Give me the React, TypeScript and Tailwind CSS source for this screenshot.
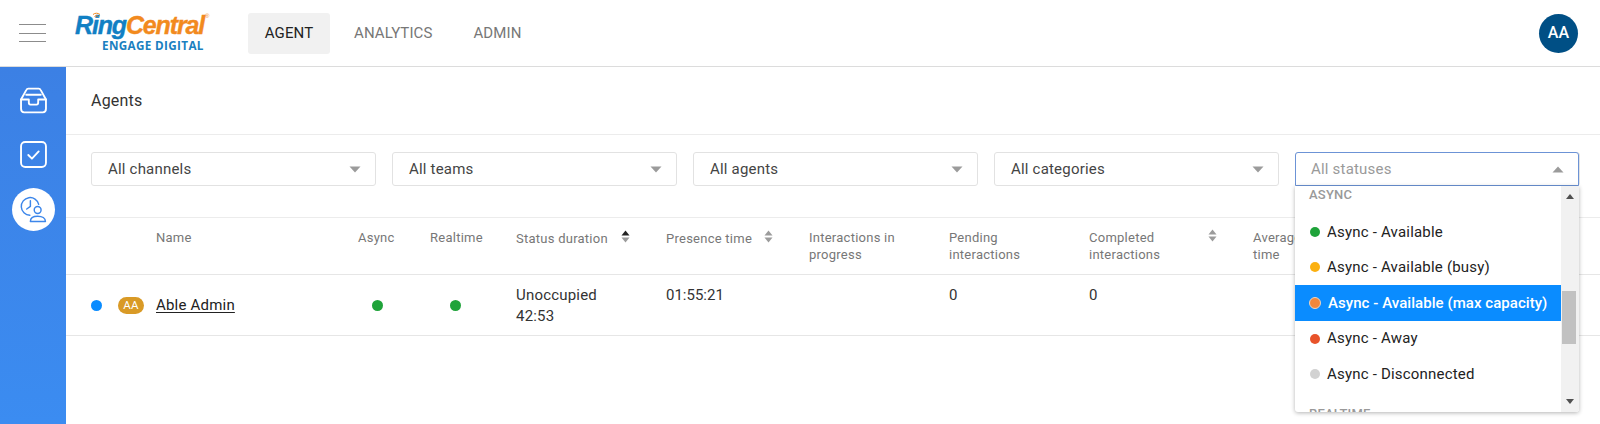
import React from "react";

const Caret = ({ up = false, cls = "" }: { up?: boolean; cls?: string }) => (
  <svg width="12" height="7" viewBox="0 0 12 7" className={cls}>
    <path d={up ? "M6 0.5L11.5 6.5H0.5Z" : "M0.5 0.5H11.5L6 6.5Z"} fill="#9b9b9b" />
  </svg>
);

const Sort = ({ active = false }: { active?: boolean }) => (
  <svg width="9" height="13" viewBox="0 0 9 13" className="shrink-0">
    <path d="M4.5 0.5L8.5 5.5H0.5Z" fill={active ? "#222" : "#9b9b9b"} />
    <path d="M0.5 7.5H8.5L4.5 12.5Z" fill="#9b9b9b" />
  </svg>
);

const Filter = ({ label }: { label: string }) => (
  <div className="flex h-[34px] w-[285px] items-center justify-between rounded-[3px] border border-[#e2e2e2] bg-white pl-[16px] pr-[14px] text-[15px] text-[#444]">
    <span className="pt-[1px]">{label}</span>
    <Caret />
  </div>
);

const Option = ({ color, label, active = false }: { color: string; label: string; active?: boolean }) => (
  <div className={`flex h-[35.6px] items-center ${active ? "bg-[#0a8cff] pl-[14px] font-medium tracking-[0.05px] text-white" : "pl-[15px] text-[#222]"}`}>
    <span
      className={`rounded-full ${active ? "mr-[7px] h-[12px] w-[12px] border border-[#e8d5c4]" : "mr-[7px] h-[10px] w-[10px]"}`}
      style={{ backgroundColor: color }}
    />
    <span className="whitespace-nowrap">{label}</span>
  </div>
);

const Head = ({ children }: { children: React.ReactNode }) => (
  <div className="leading-[17px]">{children}</div>
);

const App = () => (
  <div className="relative flex h-[424px] w-[1600px] flex-col overflow-hidden bg-white font-['Roboto',sans-serif] tracking-[0.2px]">
    <header className="flex h-[67px] shrink-0 items-center border-b border-[#dcdcdc] bg-white">
      <div className="ml-[19px] flex w-[27px] flex-col gap-[7.5px]">
        <div className="h-px bg-[#8c8c8c]" />
        <div className="h-px bg-[#8c8c8c]" />
        <div className="h-px bg-[#8c8c8c]" />
      </div>
      <div className="ml-[29px] flex w-[135px] flex-col">
        <div className="relative flex h-[24px] items-center text-[25px] font-bold italic leading-none tracking-[-1.15px] [-webkit-text-stroke:0.4px] font-['Liberation_Sans',sans-serif]">
          <span className="text-[#1180c4]">Ring</span>
          <span className="text-[#f28a1e]">Central</span>
          <span className="ml-[1px] self-start text-[6px] font-normal not-italic text-[#f28a1e] [-webkit-text-stroke:0px]">®</span>
          <svg width="9" height="6" viewBox="0 0 9 6" className="absolute left-[17px] top-[-1px]">
            <path d="M1 2.5C3 .8 6 .8 8 2.5M2.5 4.5C3.8 3.5 5.2 3.5 6.5 4.5" stroke="#f28a1e" strokeWidth="1" fill="none" />
          </svg>
        </div>
        <div className="ml-[27px] whitespace-nowrap text-[11.7px] font-bold leading-[16px] tracking-[0.35px] text-[#1a80c0] font-['Open_Sans',sans-serif]">
          ENGAGE DIGITAL
        </div>
      </div>
      <nav className="ml-[38px] flex items-center text-[15px] tracking-[0.1px]">
        <div className="flex h-[41px] w-[82px] items-center justify-center rounded-[3px] bg-[#f1f1f1] text-[#222]">AGENT</div>
        <div className="ml-[24px] text-[#777]">ANALYTICS</div>
        <div className="ml-[41px] text-[#777]">ADMIN</div>
      </nav>
      <div className="ml-auto mr-[22px] flex h-[39px] w-[39px] items-center justify-center rounded-full bg-[#004f85] text-[16px] font-medium text-white">
        AA
      </div>
    </header>

    <div className="flex min-h-0 flex-1">
      <aside className="flex w-[66px] shrink-0 flex-col items-center bg-gradient-to-b from-[#3c80e4] to-[#3b8cf1] pt-[20px]">
        <svg width="27" height="27" viewBox="0 0 26 26" fill="none" stroke="white" strokeWidth="1.8" strokeLinejoin="round" strokeLinecap="round">
          <path d="M1 12L6 3C6.4 2.2 7 1.6 8 1.6H18C19 1.6 19.6 2.2 20 3L25 12V21C25 23 24 24.4 22 24.4H4C2 24.4 1 23 1 21Z" />
          <path d="M1 12H8.5V15C8.5 16.3 9 17 10 17H16C17 17 17.5 16.3 17.5 15V12H25" />
          <path d="M6 7.5H20" />
        </svg>
        <svg width="27" height="27" viewBox="0 0 26 26" fill="none" stroke="white" strokeWidth="1.8" strokeLinejoin="round" strokeLinecap="round" className="mt-[27px]">
          <rect x="1" y="1" width="24" height="24" rx="4" />
          <path d="M8 13.5L11.5 17L18 10" />
        </svg>
        <div className="mt-[20px] flex h-[43px] w-[43px] items-center justify-center rounded-full bg-white">
          <svg width="27" height="27" viewBox="0 0 26 26" fill="none" stroke="#3c86ea" strokeWidth="1.4" strokeLinecap="round" strokeLinejoin="round">
            <path d="M9.5 18.5A8.5 8.5 0 1 1 18 8" />
            <path d="M10 4.5V10L6.5 12.5" />
            <circle cx="17" cy="13.5" r="3.3" />
            <path d="M10 24.5C10 21.5 12.5 19.5 17 19.5C21.5 19.5 24.5 21.5 24.5 24.5Z" />
          </svg>
        </div>
      </aside>

      <main className="min-w-0 flex-1">
        <div className="flex h-[68px] items-center border-b border-[#ececec] pl-[25px] text-[16px] text-[#333]">Agents</div>
        <div className="flex h-[83px] gap-[16px] border-b border-[#ececec] pl-[25px] pt-[17px]">
          <Filter label="All channels" />
          <Filter label="All teams" />
          <Filter label="All agents" />
          <Filter label="All categories" />
          <Filter label="" />
        </div>

        <div className="grid h-[57px] grid-cols-[90px_202px_72px_86px_150px_143px_140px_140px_164px_1fr] items-start border-b border-[#e6e6e6] pt-[11px] text-[13px] tracking-[0.25px] text-[#777]">
          <div />
          <Head>Name</Head>
          <Head>Async</Head>
          <Head>Realtime</Head>
          <div className="flex w-[114px] justify-between pt-[1px]"><Head>Status duration</Head><Sort active /></div>
          <div className="flex w-[107px] justify-between pt-[1px]"><Head>Presence time</Head><Sort /></div>
          <Head>Interactions in<br />progress</Head>
          <Head>Pending<br />interactions</Head>
          <div className="flex w-[128px] justify-between"><Head>Completed<br />interactions</Head><Sort /></div>
          <Head>Average<br />time</Head>
        </div>

        <div className="grid h-[61px] grid-cols-[90px_202px_72px_86px_150px_143px_140px_140px_164px_1fr] items-start border-b border-[#e6e6e6] text-[15px] leading-[21px] text-[#333]">
          <div className="flex h-full items-center">
            <span className="ml-[25px] h-[11px] w-[11px] rounded-full bg-[#0a8cff]" />
            <span className="ml-[16px] flex h-[17px] w-[26px] items-center justify-center rounded-full bg-[#d99a26] text-[11.5px] text-white">AA</span>
          </div>
          <div className="flex h-full items-center text-[#222] underline underline-offset-2">Able Admin</div>
          <div className="flex h-full items-center pl-[14px]"><span className="h-[11px] w-[11px] rounded-full bg-[#1fa33a]" /></div>
          <div className="flex h-full items-center pl-[20px]"><span className="h-[11px] w-[11px] rounded-full bg-[#1fa33a]" /></div>
          <div className="pt-[10px]">Unoccupied<br />42:53</div>
          <div className="pt-[10px] tracking-[0px]">01:55:21</div>
          <div />
          <div className="pt-[10px]">0</div>
          <div className="pt-[10px]">0</div>
          <div />
        </div>
      </main>
    </div>

    <div className="absolute left-[1295px] top-[152px] w-[284px] text-[15px] tracking-[0.2px]">
      <div className="flex h-[34px] items-center justify-between rounded-t-[3px] border border-[#6c93d6] bg-white pl-[15px] pr-[14px] text-[#9a9a9a]">
        <span className="pt-[1px]">All statuses</span>
        <Caret up />
      </div>
      <div className="flex h-[226px] overflow-hidden rounded-b-[3px] bg-white shadow-[0_1px_4px_rgba(0,0,0,0.3)]">
        <div className="min-w-0 flex-1 overflow-hidden">
          <div className="h-[28px] pl-[14px] pt-[1px] text-[13px] font-medium leading-[15px] text-[#999]">ASYNC</div>
          <Option color="#1fa33a" label="Async - Available" />
          <Option color="#fbb010" label="Async - Available (busy)" />
          <Option color="#f0873c" label="Async - Available (max capacity)" active />
          <Option color="#e8532a" label="Async - Away" />
          <Option color="#d2d2d2" label="Async - Disconnected" />
          <div className="mt-[14px] pl-[14px] text-[13px] font-medium leading-[15px] text-[#999]">REALTIME</div>
        </div>
        <div className="flex w-[18px] shrink-0 flex-col items-center bg-[#f1f1f1]">
          <svg width="8" height="5" viewBox="0 0 8 5" className="mt-[8px]"><path d="M4 0L8 5H0Z" fill="#505050" /></svg>
          <div className="mt-[92px] mr-[2px] h-[53px] w-[14px] bg-[#c1c1c1]" />
          <svg width="8" height="5" viewBox="0 0 8 5" className="mt-auto mb-[8px]"><path d="M0 0H8L4 5Z" fill="#505050" /></svg>
        </div>
      </div>
    </div>
  </div>
);

export default App;
